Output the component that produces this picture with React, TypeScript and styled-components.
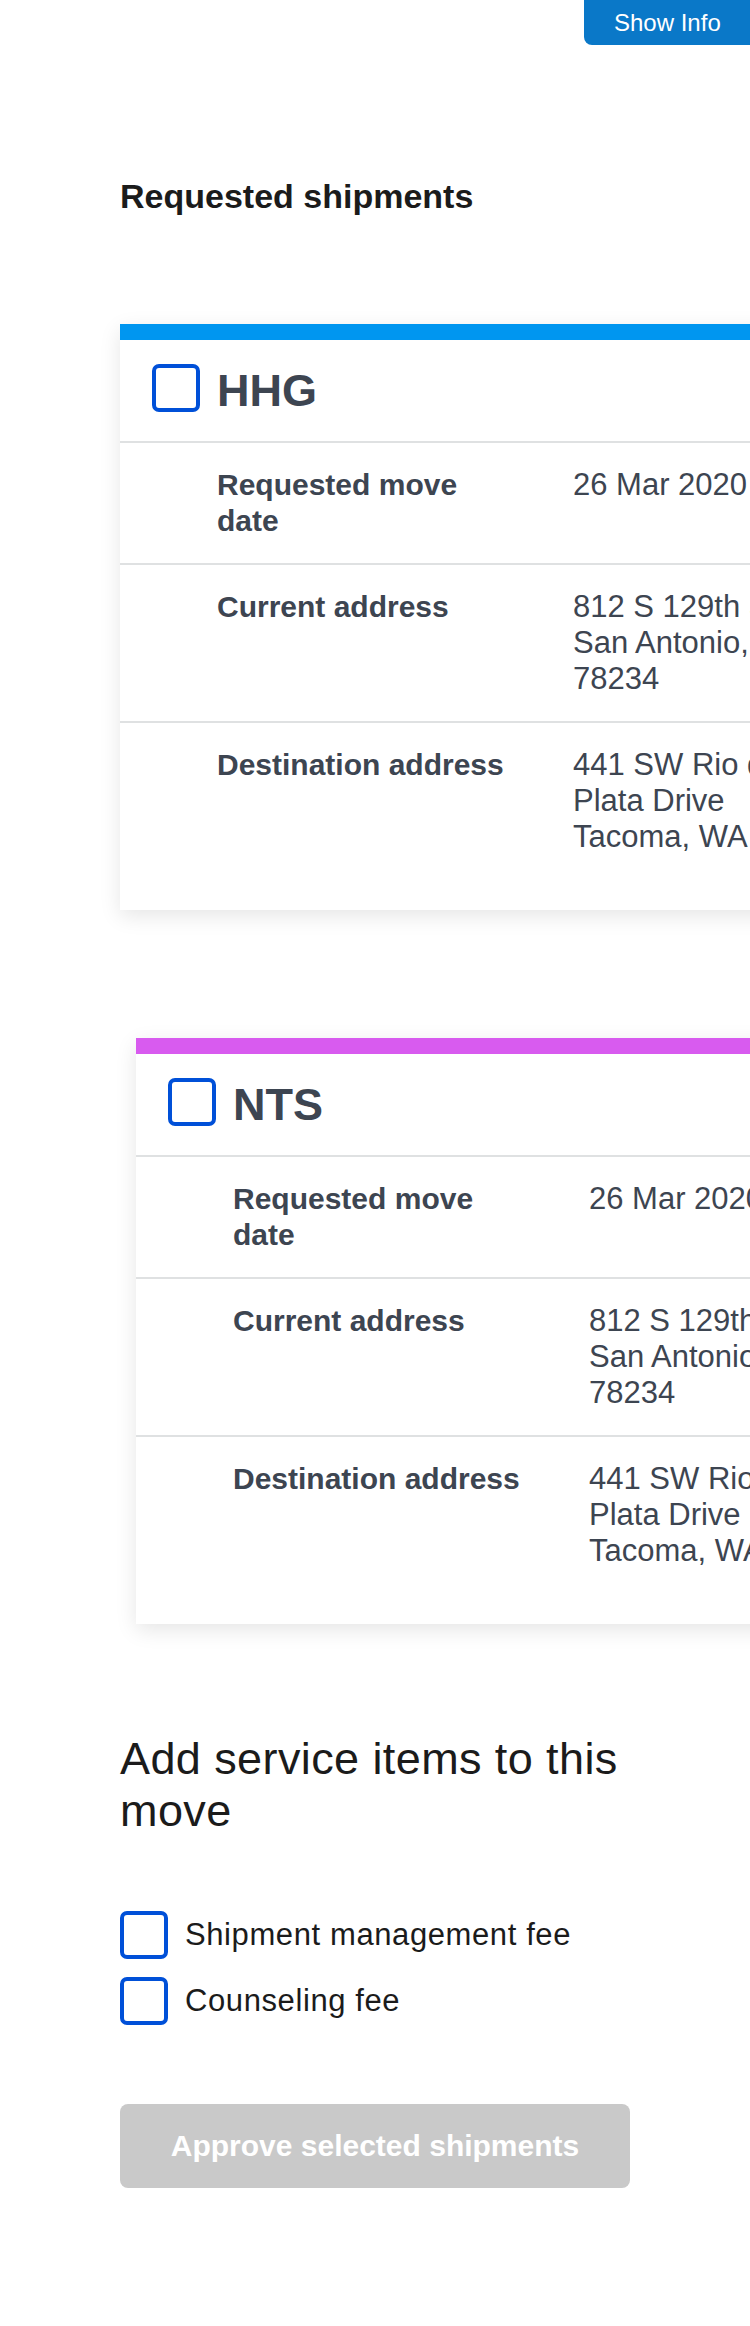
import React from 'react';
import styled, { createGlobalStyle } from 'styled-components';

type Shipment = {
  type: string;
  color: string;
  indent: boolean;
  rows: { label: string; value: string[] }[];
};

const shipments: Shipment[] = [
  {
    type: 'HHG',
    color: '#0096f0',
    indent: false,
    rows: [
      { label: 'Requested move date', value: ['26 Mar 2020'] },
      { label: 'Current address', value: ['812 S 129th Street', 'San Antonio, TX 78234'] },
      { label: 'Destination address', value: ['441 SW Rio de la Plata Drive', 'Tacoma, WA 98421'] },
    ],
  },
  {
    type: 'NTS',
    color: '#d85bef',
    indent: true,
    rows: [
      { label: 'Requested move date', value: ['26 Mar 2020'] },
      { label: 'Current address', value: ['812 S 129th Street', 'San Antonio, TX 78234'] },
      { label: 'Destination address', value: ['441 SW Rio de la Plata Drive', 'Tacoma, WA 98421'] },
    ],
  },
];

const serviceItems = ['Shipment management fee', 'Counseling fee'];

const App = () => {
  return (
    <>
      <GlobalStyle />
      <ShowInfo type="button">Show Info</ShowInfo>
      <Page>
        <Title>Requested shipments</Title>
        <CardList>
          {shipments.map((s) => (
            <Card key={s.type} $color={s.color} $indent={s.indent}>
              <CardHeader>
                <Checkbox />
                <ShipmentType>{s.type}</ShipmentType>
              </CardHeader>
              {s.rows.map((r) => (
                <Row key={r.label}>
                  <Label>{r.label}</Label>
                  <Value>
                    {r.value.map((line) => (
                      <div key={line}>{line}</div>
                    ))}
                  </Value>
                </Row>
              ))}
            </Card>
          ))}
        </CardList>
        <Heading>Add service items to this move</Heading>
        <ServiceList>
          {serviceItems.map((item) => (
            <ServiceItem key={item}>
              <Checkbox />
              <ServiceLabel>{item}</ServiceLabel>
            </ServiceItem>
          ))}
        </ServiceList>
        <ApproveButton type="button" disabled>
          Approve selected shipments
        </ApproveButton>
      </Page>
    </>
  );
};

export default App;

const GlobalStyle = createGlobalStyle`
  html, body {
    margin: 0;
    padding: 0;
    overflow-x: hidden;
    background: #ffffff;
  }
  body {
    font-family: 'Liberation Sans', Arial, sans-serif;
    color: #1b1b1b;
  }
`;

const ShowInfo = styled.button`
  position: absolute;
  top: 0;
  left: 584px;
  width: 200px;
  height: 45px;
  border: none;
  border-radius: 0 0 0 8px;
  background: #0a78c8;
  color: #ffffff;
  font-family: 'Liberation Sans', Arial, sans-serif;
  font-size: 24px;
  line-height: 45px;
  text-align: left;
  padding: 0 0 0 30px;
  cursor: pointer;
`;

const Page = styled.div`
  padding: 176px 0 138px 120px;
`;

const Title = styled.h2`
  margin: 0;
  font-size: 34px;
  line-height: 40px;
  font-weight: 700;
  color: #1b1b1b;
`;

const CardList = styled.div`
  display: flex;
  flex-direction: column;
  gap: 128px;
  margin-top: 108px;
`;

const Card = styled.div<{ $color: string; $indent: boolean }>`
  width: 820px;
  margin-left: ${(p) => (p.$indent ? '16px' : '0')};
  background: #ffffff;
  border-top: 16px solid ${(p) => p.$color};
  padding-bottom: 31px;
  box-shadow: 0 6px 20px rgba(0, 0, 0, 0.1);
  color: #3d4551;
`;

const CardHeader = styled.div`
  display: flex;
  align-items: center;
  gap: 17px;
  padding: 24px 32px 29px;
`;

const Checkbox = styled.span`
  display: block;
  flex: none;
  box-sizing: border-box;
  width: 48px;
  height: 48px;
  border: 4px solid #0050d8;
  border-radius: 7px;
  background: #ffffff;
`;

const ShipmentType = styled.h3`
  margin: 0;
  padding-top: 6px;
  font-size: 45px;
  line-height: 42px;
  font-weight: 700;
  color: #3d4551;
`;

const Row = styled.div`
  display: grid;
  grid-template-columns: 300px 290px;
  column-gap: 56px;
  padding: 24px 0 24px 97px;
  border-top: 2px solid #dfe1e2;
`;

const Label = styled.div`
  font-size: 30px;
  line-height: 36px;
  font-weight: 700;
  color: #3d4551;
`;

const Value = styled.div`
  font-size: 31px;
  line-height: 36px;
  color: #3d4551;
`;

const Heading = styled.h2`
  max-width: 510px;
  margin: 109px 0 0;
  font-size: 45px;
  line-height: 52px;
  letter-spacing: 0.4px;
  font-weight: 400;
  color: #1b1b1b;
`;

const ServiceList = styled.div`
  display: flex;
  flex-direction: column;
  gap: 18px;
  margin-top: 74px;
`;

const ServiceItem = styled.label`
  display: flex;
  align-items: center;
  gap: 17px;
  cursor: pointer;
`;

const ServiceLabel = styled.span`
  font-size: 31px;
  line-height: 48px;
  letter-spacing: 0.6px;
  color: #1b1b1b;
`;

const ApproveButton = styled.button`
  display: block;
  width: 510px;
  height: 84px;
  margin-top: 79px;
  border: none;
  border-radius: 8px;
  background: #c9c9c9;
  color: #ffffff;
  font-family: 'Liberation Sans', Arial, sans-serif;
  font-size: 30px;
  font-weight: 700;
  cursor: not-allowed;
`;
